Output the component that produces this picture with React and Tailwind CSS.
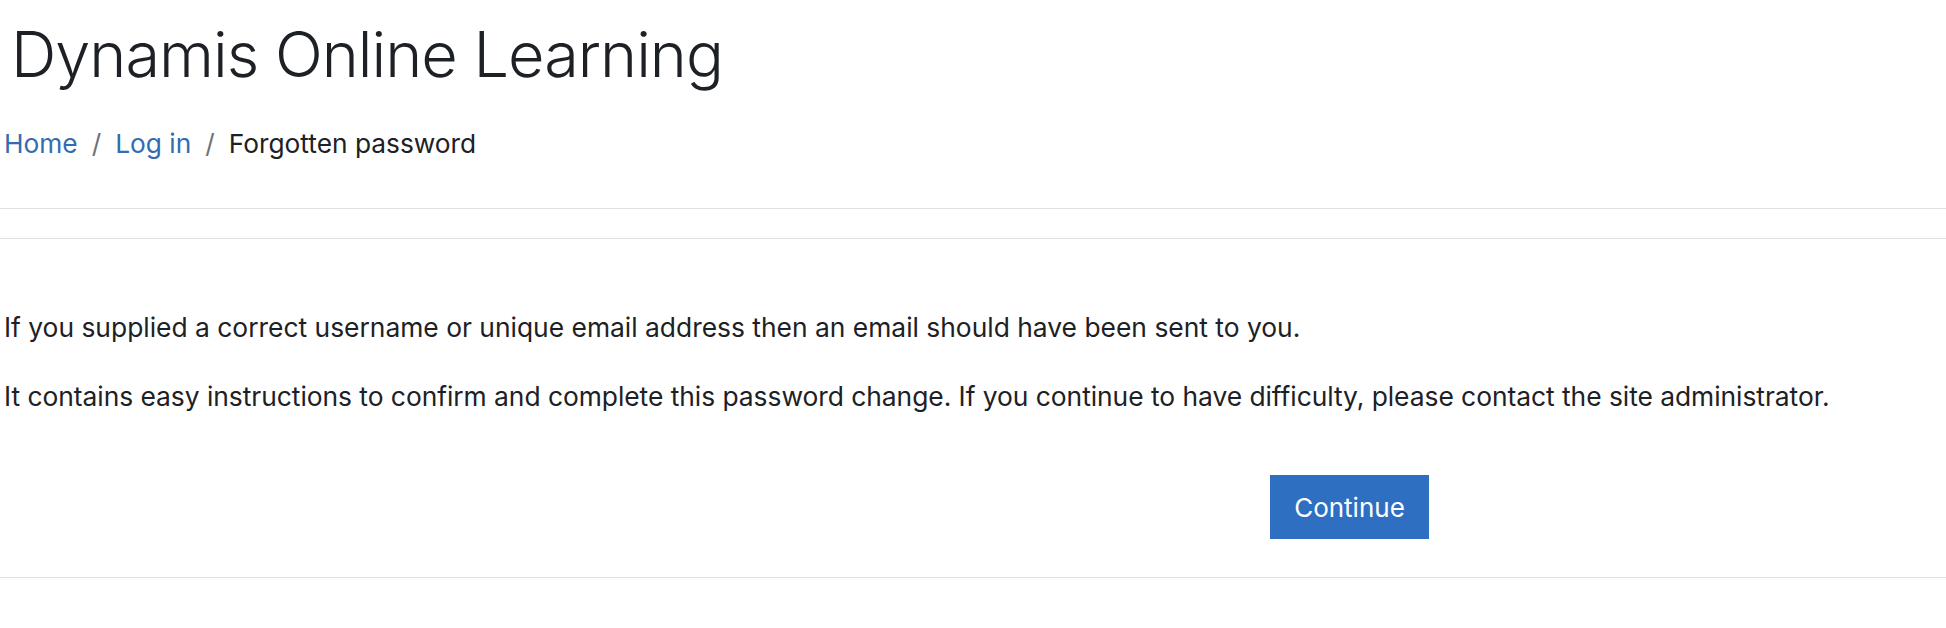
export default function App() {
  return (
    <div className="w-[1946px] h-[628px] bg-white font-['Inter',sans-serif] text-[#1d2125]">
      <header className="px-[4px] pt-[16px] pb-[45px] border-b border-[#dee2e6]">
        <h1 className="text-[63px] font-light leading-[77px] tracking-[-1px] ml-[7px]">Dynamis Online Learning</h1>
        <nav className="mt-[31px] flex items-center text-[26.3px] leading-[39px]">
          <a className="text-[#336cb0]">Home</a>
          <span className="px-[14px] text-[#6a737b]">/</span>
          <a className="text-[#336cb0]">Log in</a>
          <span className="px-[14px] text-[#6a737b]">/</span>
          <span>Forgotten password</span>
        </nav>
      </header>
      <div className="mt-[29px] border-t border-[#dee2e6] px-[4px] pt-[69px]">
        <p className="text-[26.4px] leading-[39px] mb-[30px]">
          If you supplied a correct username or unique email address then an email should have been sent to you.
        </p>
        <p className="text-[26.4px] leading-[39px] tracking-[-0.04px]">
          It contains easy instructions to confirm and complete this password change. If you continue to have difficulty, please contact the site administrator.
        </p>
        <div className="mt-[59px] pb-[38px] pl-[1266px]">
          <button className="w-[159px] h-[64px] bg-[#2f6fc2] text-white text-[26px]">Continue</button>
        </div>
      </div>
      <div className="border-t border-[#dee2e6]"></div>
    </div>
  );
}
